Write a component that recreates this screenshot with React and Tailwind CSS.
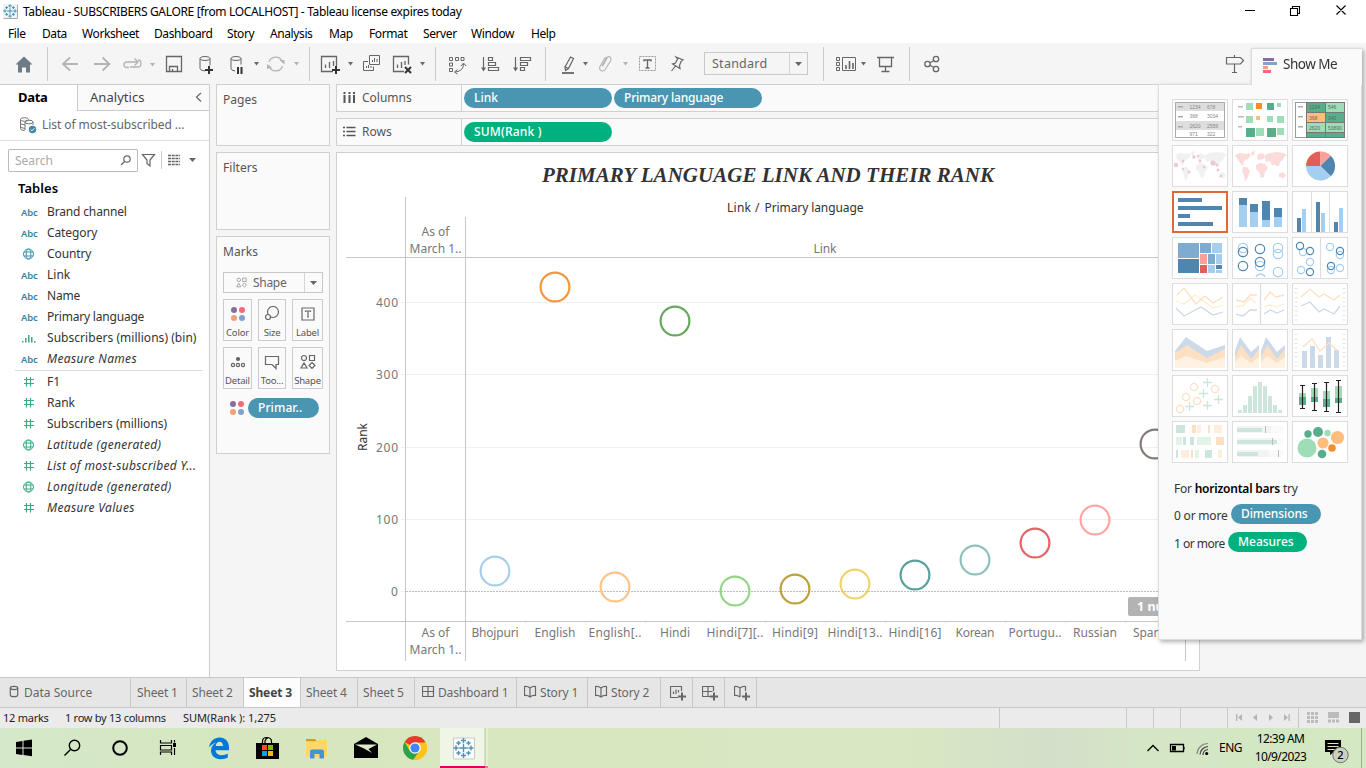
import React from "react";

/* Icon cell: the view box uses window coordinates so that neighbouring cells line up. */
function Cell({ x, y = 0, w, h, children, className = "" }) {
  return (
    <svg width={w} height={h} viewBox={`${x} ${y} ${w} ${h}`} fill="none" className={`block shrink-0 ${className}`}>
      {children}
    </svg>
  );
}

const INK = "#666";
const PALE = "#b4b4b4";

const Caret = ({ x, y = 62, color = INK }) => <path d={`M${x} ${y}h5l-2.5 3.5z`} fill={color} />;
const Sep = ({ x }) => <path d={`M${x + 0.5} 47v34`} stroke="#cbcbcb" />;
const Plus = ({ x, y, s = 4 }) => <path d={`M${x - s} ${y}h${2 * s}M${x} ${y - s}v${2 * s}`} stroke="#333" strokeWidth="2" />;

function Snowflake({ x, y, s = 1, stroke = "#3f8fb5" }) {
  const arms = [[0, 0, 3.4], [0, -6, 2], [0, 6, 2], [-6, 0, 2], [6, 0, 2], [-4, -4, 1.7], [4, -4, 1.7], [-4, 4, 1.7], [4, 4, 1.7]];
  return (
    <g transform={`translate(${x} ${y}) scale(${s})`} stroke={stroke} strokeWidth="1.1">
      {arms.map(([a, b, r], i) => (
        <path key={i} d={`M${a - r} ${b}h${2 * r}M${a} ${b - r}v${2 * r}`} />
      ))}
    </g>
  );
}

function TitleBar() {
  return (
    <header className="flex h-6 shrink-0 items-center bg-white">
      <Cell x={0} w={22} h={24}>
        <path d="M3.5 18.5h14v-14" stroke="#aaa" />
        <rect x="3" y="4" width="14" height="14" fill="#f1f3f4" />
        <Snowflake x={10} y={11} s={0.85} />
      </Cell>
      <h1 className="ml-px flex-1 whitespace-nowrap text-[12px] leading-6 tracking-[-0.340px] text-black">
        Tableau - SUBSCRIBERS GALORE [from LOCALHOST] - Tableau license expires today
      </h1>
      <Cell x={1230} w={136} h={24}>
        <path d="M1245 10.5h10M1290.500 8.500h7v7h-7zM1292.500 8.500v-2h7v7h-2M1336.500 5.500l9 9M1345.500 5.500l-9 9" stroke="#000" strokeWidth="1.100" />
      </Cell>
    </header>
  );
}

function MenuBar() {
  const items = [
    ["File", "w-[34px]"], ["Data", "w-[40px]"], ["Worksheet", "w-[72px]"], ["Dashboard", "w-[73px]"], ["Story", "w-[43px]"],
    ["Analysis", "w-[59px]"], ["Map", "w-[40px]"], ["Format", "w-[54px]"], ["Server", "w-[48px]"], ["Window", "w-[60px]"], ["Help", "w-[40px]"],
  ];
  return (
    <nav className="flex h-[19px] shrink-0 bg-white pl-2 text-[12px] leading-5 tracking-[-0.400px] text-black">
      {items.map(([t, w]) => <span key={t} className={`${w} shrink-0 whitespace-nowrap`}>{t}</span>)}
    </nav>
  );
}

function Toolbar() {
  const c = { y: 43, h: 41 };
  return (
    <div className="flex h-[41px] shrink-0 bg-[#f5f5f5]">
      <Cell x={0} w={48} {...c}>
        <path d="M24 56.500l8.500 8h-2.500v8h-4v-5h-4v5h-4v-8h-2.500z" fill="#707b88" />
        <Sep x={47} />
      </Cell>
      <Cell x={48} w={68} {...c}>
        <path d="M78 64H63M70 57.500L63 64l7 6.500M94 64h15M102.500 57.500l7 6.500-7 6.500" stroke={PALE} strokeWidth="1.800" />
      </Cell>
      <Cell x={116} w={44} {...c}>
        <path d="M129 67.500h-2q-3 0-3-2.500 0-3 3-3h10M134.500 58.500l3.500 3.500-3.500 3.500M138 60q3 0 3 3.500t-3 3.500h-8" stroke={PALE} strokeWidth="1.300" />
        <Caret x={150} y={63} color={PALE} />
      </Cell>
      <Cell x={160} w={30} {...c}><path d="M166.500 56.500h15v15h-15zM169.500 71v-4.500h8v4.500M172.500 71v-2" stroke={INK} strokeWidth="1.300" /></Cell>
      <Cell x={190} w={34} {...c}>
        <ellipse cx="205" cy="58.500" rx="5" ry="2" stroke={INK} />
        <path d="M200 58.500v10q0 2 5 2.500M210 58.500v7" stroke={INK} />
        <Plus x={209} y={70} />
      </Cell>
      <Cell x={224} w={40} {...c}>
        <ellipse cx="236" cy="58.500" rx="5" ry="2" stroke={INK} />
        <path d="M231 58.500v10q0 2 4 2.500M241 58.500v6" stroke={INK} />
        <path d="M238 67v7M241.500 67v7" stroke="#333" strokeWidth="2" />
        <Caret x={254} />
      </Cell>
      <Cell x={264} w={46} {...c}>
        <path d="M269 62a7 7 0 0 1 13-1M282.500 66a7 7 0 0 1-13 1" stroke={PALE} strokeWidth="1.300" />
        <path d="M279.500 60h5v4.500zM267 64v5l5-1.500z" fill={PALE} />
        <Caret x={294} color={PALE} />
        <Sep x={309} />
      </Cell>
      <Cell x={310} w={48} {...c}>
        <path d="M333 71.500h-11.500v-15h15v10M325.500 68v-3.500M329.500 68v-6M333.500 66v-5" stroke={INK} strokeWidth="1.300" />
        <Plus x={336} y={70} />
        <Caret x={348} />
      </Cell>
      <Cell x={358} w={28} {...c}>
        <path d="M369.500 55.500h10v9h-10zM372.500 62v-2M374.500 62v-4M377 62v-3M368 61.500h-4.500v9h10v-4M366.500 68v-2M368.500 68v-3M371 68v-2" stroke={INK} />
      </Cell>
      <Cell x={386} w={50} {...c}>
        <path d="M404 71.500h-10.500v-15h15v8M397.500 68v-3.500M401.500 68v-6M405 65v-4" stroke={INK} strokeWidth="1.300" />
        <path d="M405 67l6 6M411 67l-6 6" stroke="#333" strokeWidth="2" />
        <Caret x={420} />
        <Sep x={435} />
      </Cell>
      <Cell x={436} w={36} {...c}>
        <path d="M449.500 57.500h3v3h-3zM455.500 57.500h3v3h-3zM461 57.500h3v3h-3zM449.500 63h3v3h-3zM449.500 68.500h3v3h-3zM463.500 64q0 7-8 8M461 66l2.500-3 2.500 3M457.500 69.500l-3 2.500 3 2" stroke={INK} />
      </Cell>
      <Cell x={472} w={32} {...c}>
        <path d="M483.500 57v12M488.500 57.500h4v3h-4zM488.500 62.500h7v3h-7zM488.500 67.500h10v3h-10z" stroke={INK} strokeWidth="1.200" />
        <path d="M481 67.500h5l-2.500 4z" fill={INK} />
      </Cell>
      <Cell x={504} w={42} {...c}>
        <path d="M515.500 57v12M520.500 57.500h10v3h-10zM520.500 62.500h7v3h-7zM520.500 67.500h4v3h-4z" stroke={INK} strokeWidth="1.200" />
        <path d="M513 67.500h5l-2.500 4z" fill={INK} />
        <Sep x={545} />
      </Cell>
      <Cell x={546} w={46} {...c}>
        <path d="M565 67l5.500-10 3 1.500-5 10-3 2-.5-3.500 3.500 1.500" stroke={INK} strokeWidth="1.200" />
        <path d="M562 73h12" stroke={INK} strokeWidth="1.800" />
        <Caret x={583} />
      </Cell>
      <Cell x={592} w={40} {...c}>
        <path d="M602 66l4.500-8q2-2.500 4-.5 1 1.500 0 3.500l-5 8q-2 3-4.500 1.500t-.5-5l4.500-7.500q1.500-1 2 .5l-4.500 8" stroke={PALE} strokeWidth="1.100" />
        <Caret x={623} color={PALE} />
      </Cell>
      <Cell x={632} w={30} {...c}>
        <path d="M639.500 56.500h16v14h-16z" stroke="#999" strokeDasharray="2 1" />
        <path d="M644 61.500v-1.500h7v1.500M647.500 60v8M645.500 68h4" stroke={INK} strokeWidth="1.300" />
      </Cell>
      <Cell x={662} w={42} {...c}>
        <path d="M676 57l7 3-2 1.500-1.500 4 .5 3-7.500-4.500 3-1 2-4zM675.500 66l-4 5" stroke={INK} strokeWidth="1.200" />
      </Cell>
      <div className="mt-[9px] flex h-[23px] w-[104px] shrink-0 border border-[#c8c8c8]">
        <span className="flex-1 pl-[7px] text-[12.500px] leading-[21px] tracking-[0.250px] text-[#666]">Standard</span>
        <span className="flex w-[18px] items-center justify-center border-l border-[#d4d4d4]">
          <svg width="7" height="4"><path d="M0 0h7L3.500 4z" fill={INK} /></svg>
        </span>
      </div>
      <Cell x={808} w={64} {...c}>
        <Sep x={823} />
        <path d="M836.500 57.500h3v3h-3zM836.500 62.500h3v3h-3zM836.500 67.500h3v3h-3zM842.500 57.500h13v13h-13z" stroke={INK} />
        <path d="M846 69v-4M849.500 69v-8M853 69v-6" stroke={INK} strokeWidth="1.600" />
        <Caret x={861} />
      </Cell>
      <Cell x={872} w={38} {...c}>
        <path d="M877 57.500h17M879.500 58v8.500h12V58M885.500 67v4M881.500 71.500h8" stroke={INK} strokeWidth="1.300" />
        <Sep x={909} />
      </Cell>
      <Cell x={910} w={40} {...c}>
        <g stroke={INK} strokeWidth="1.300">
          <circle cx="927.500" cy="64" r="2.700" /><circle cx="936" cy="59" r="2.700" /><circle cx="936" cy="69" r="2.700" />
          <path d="M930 62.700l3.500-2M930 65.300l3.500 2" />
        </g>
      </Cell>
      <Cell x={1220} w={30} {...c} className="ml-[270px]">
        <path d="M1226.500 57.500h14l3 3-3 3.500h-14zM1234.500 55v2M1234.500 64v8M1232 72.500h5" stroke={INK} strokeWidth="1.200" />
      </Cell>
    </div>
  );
}

function FieldIcon({ kind }) {
  if (kind === "abc") return <span className="w-[18px] text-[9.500px] font-semibold leading-[21px] tracking-[-0.200px] text-[#3f7f9f]">Abc</span>;
  const green = "#3daa80";
  if (kind === "hash")
    return <svg width="18" height="12" fill="none" className="mt-1"><path d="M5.500 1v9.500M9.500 1v9.500M3 3.500h10M3 7.500h10" stroke={green} strokeWidth="1.200" /></svg>;
  if (kind === "bin")
    return <svg width="18" height="12" className="mt-1"><path d="M1 9h1.500v1.500H1zM4 6h1.500v4.500H4zM7 3h1.500v7.500H7zM10 5h1.500v5.500H10zM13 9h1.500v1.500H13z" fill={green} /></svg>;
  const col = kind === "geo" ? "#3f8fb5" : green;
  return (
    <svg width="18" height="12" fill="none" stroke={col} className="mt-1">
      <circle cx="7.500" cy="6" r="5" /><ellipse cx="7.500" cy="6" rx="2.300" ry="5" /><path d="M3 4h9M3 8h9" />
    </svg>
  );
}

function Field({ kind, name, italic, cls = "" }) {
  return (
    <li className="flex h-[21px] pl-[21px] text-[12px] leading-[21px] text-[#333]">
      <FieldIcon kind={kind} />
      <span className={`-mt-px ml-2 whitespace-nowrap ${italic ? "italic tracking-[0.330px]" : ""} ${cls}`}>{name}</span>
    </li>
  );
}

function DataPane() {
  return (
    <aside className="flex w-[210px] shrink-0 flex-col border-r border-t border-[#ccc] bg-white">
      <div className="flex h-[26px]">
        <div className="w-[77px] pl-[18px] text-[13px] font-bold leading-[25px] tracking-[-0.300px] text-black">Data</div>
        <div className="flex flex-1 items-center border-b border-l border-[#ccc] bg-[#fafafa] pl-3">
          <span className="-mt-[2px] flex-1 text-[13px] leading-6 tracking-[0.050px] text-[#444]">Analytics</span>
          <svg width="15" height="12" fill="none" className="-mt-[2px]"><path d="M7 2L2.500 6 7 10.500" stroke={INK} strokeWidth="1.200" /></svg>
        </div>
      </div>
      <div className="flex h-[30px] border-b border-[#ddd]">
        <Cell x={0} y={111} w={42} h={29}>
          <g stroke="#777" strokeWidth="1">
            <ellipse cx="24.500" cy="119.500" rx="4" ry="1.800" /><path d="M20.500 119.500v9q0 2 4 2" /><ellipse cx="29" cy="122" rx="4" ry="1.800" /><path d="M25 122v8M33 122v3M21 124l4 1M21 127.500l4 1" />
          </g>
          <circle cx="32.500" cy="129.500" r="3.700" fill="#3f86a8" /><path d="M30.700 129.500l1.300 1.300 2.300-2.500" stroke="#fff" />
        </Cell>
        <span className="text-[12px] leading-7 tracking-[-0.060px] text-[#666]">List of most-subscribed ...</span>
      </div>
      <div className="flex pl-2 pt-2">
        <div className="flex h-[23px] w-[130px] rounded-[1px] border border-[#bbb]">
          <span className="flex-1 pl-[6px] text-[12px] leading-[21px] text-[#aaa]">Search</span>
          <svg width="24" height="21" fill="none" stroke={INK} strokeWidth="1.200"><circle cx="14" cy="9" r="3.200" /><path d="M11.500 11.500L8 15" /></svg>
        </div>
        <Cell x={138} y={149} w={71} h={23}>
          <path d="M142.500 154.500h12l-4.500 5.500v6l-3-2.500V160z" stroke={INK} strokeWidth="1.200" />
          <path d="M161.500 151v18" stroke="#ccc" />
          <path d="M168 155.500h12M168 158.500h12M168 161.500h12M168 164.500h12" stroke={INK} strokeWidth="1.300" strokeDasharray="3 0.700" />
          <path d="M189 158h7l-3.500 4z" fill={INK} />
        </Cell>
      </div>
      <h2 className="mt-[5px] pl-[18px] text-[13px] font-semibold leading-[22px] tracking-[0.050px] text-black">Tables</h2>
      <ul className="mt-[3px]">
        <Field kind="abc" name="Brand channel" cls="tracking-[-0.150px]" />
        <Field kind="abc" name="Category" cls="tracking-[-0.100px]" />
        <Field kind="geo" name="Country" cls="tracking-[-0.100px]" />
        <Field kind="abc" name="Link" />
        <Field kind="abc" name="Name" cls="tracking-[-0.200px]" />
        <Field kind="abc" name="Primary language" cls="tracking-[-0.200px]" />
        <Field kind="bin" name="Subscribers (millions) (bin)" cls="tracking-[0.040px]" />
        <Field kind="abc" name="Measure Names" italic cls="-ml-0" />
      </ul>
      <div className="mb-px ml-[15px] mr-[6px] h-px bg-[#ddd]" />
      <ul>
        <Field kind="hash" name="F1" />
        <Field kind="hash" name="Rank" />
        <Field kind="hash" name="Subscribers (millions)" />
        <Field kind="globe" name="Latitude (generated)" italic />
        <Field kind="hash" name="List of most-subscribed Y..." italic />
        <Field kind="globe" name="Longitude (generated)" italic />
        <Field kind="hash" name="Measure Values" italic />
      </ul>
    </aside>
  );
}

const Dots = () => (
  <>
    <circle cx="4" cy="4" r="3" fill="#86709a" /><circle cx="12" cy="4" r="3" fill="#f7687d" />
    <circle cx="4" cy="12" r="3" fill="#f2a07a" /><circle cx="12" cy="12" r="3" fill="#7fa3cc" />
  </>
);
const ShapeGlyph = ({ color = INK }) => (
  <g stroke={color} fill="none" strokeWidth="1.200">
    <circle cx="4" cy="4" r="2.500" /><path d="M9.500 1.500h5v5h-5zM1 14h6L4 9zM12 8.500l3 3-3 3-3-3z" />
  </g>
);

function MarkButton({ label, w, children }) {
  return (
    <div className={`flex h-[42px] ${w} flex-col items-center border border-[#ccc] bg-[#fafafa] pt-[6px]`}>
      <svg width="16" height="16" viewBox="0 0 16 16" fill="none" stroke={INK} strokeWidth="1.200">{children}</svg>
      <span className="mt-[4px] text-[9.500px] leading-[14px] tracking-[-0.200px] text-[#555]">{label}</span>
    </div>
  );
}

const card = "border border-[#d0d0d0] bg-[#fafafa]";
const cardTitle = "pl-[6px] text-[12px] leading-[30px] tracking-[0.050px] text-[#555]";

function Cards() {
  return (
    <section className="flex w-[126px] shrink-0 flex-col gap-[6px] pl-[6px] pr-[6px]">
      <div className={`${card} h-[62px]`}><div className={cardTitle}>Pages</div></div>
      <div className={`${card} h-[78px]`}><div className={cardTitle}>Filters</div></div>
      <div className={`${card} h-[218px]`}>
        <div className={cardTitle}>Marks</div>
        <div className="ml-[6px] mt-[5px] flex h-[21px] w-[100px] border border-[#c8c8c8]">
          <svg width="29" height="19" className="shrink-0"><g transform="translate(12 4) scale(.7)"><ShapeGlyph color="#999" /></g></svg>
          <span className="flex-1 text-[12px] leading-[20px] tracking-[-0.300px] text-[#666]">Shape</span>
          <span className="flex w-[18px] items-center justify-center border-l border-[#d4d4d4]"><svg width="7" height="4"><path d="M0 0h7L3.500 4z" fill={INK} /></svg></span>
        </div>
        <div className="ml-[6px] mt-[6px] flex gap-[6px]">
          <MarkButton label="Color" w="w-[29px]"><g stroke="none"><Dots /></g></MarkButton>
          <MarkButton label="Size" w="w-[28px]"><circle cx="9" cy="6" r="5.500" /><circle cx="4" cy="11" r="2.500" fill="#fafafa" /></MarkButton>
          <MarkButton label="Label" w="w-[31px]"><path d="M2 2h12v12H2zM5.500 6V5h5v1M8 5v6M7 11h2" /></MarkButton>
        </div>
        <div className="ml-[6px] mt-[6px] flex gap-[6px]">
          <MarkButton label="Detail" w="w-[29px]"><circle cx="8" cy="5" r="1.500" fill={INK} /><circle cx="3" cy="11" r="1.600" /><circle cx="8" cy="11" r="1.600" /><circle cx="13" cy="11" r="1.600" /></MarkButton>
          <MarkButton label="Too..." w="w-[28px]"><path d="M1.500 2.500h13v8H12v4l-4-4H1.500z" /></MarkButton>
          <MarkButton label="Shape" w="w-[31px]"><ShapeGlyph /></MarkButton>
        </div>
        <div className="ml-[12px] mt-[9px] flex items-center gap-[3px]">
          <svg width="16" height="16"><Dots /></svg>
          <Pill className="w-[71px] bg-[#4996b2] tracking-[0.100px]">Primar..</Pill>
        </div>
      </div>
    </section>
  );
}

function Pill({ className, children }) {
  return <span className={`flex h-5 items-center whitespace-nowrap rounded-full pl-[10px] text-[12px] font-medium leading-5 text-white ${className}`}>{children}</span>;
}

const MARKS = [
  ["Bhojpuri", 571, "#a0cbe8", 47], ["English", 287, "#f28e2b", 41], ["English[..", 587, "#ffbe7d", 53], ["Hindi", 321, "#59a14f", 30],
  ["Hindi[7][..", 591, "#8cd17d", 57], ["Hindi[9]", 589, "#b6992d", 46], ["Hindi[13..", 584, "#f1ce63", 55], ["Hindi[16]", 575, "#499894", 53],
  ["Korean", 560, "#86bcb6", 39], ["Portugu..", 543, "#e15759", 53], ["Russian", 520, "#ff9d9a", 44], ["Spanish", 444, "#79706e", 44],
];

function AsOf({ y }) {
  return (
    <>
      <text x="435.500" y={y} textAnchor="middle" textLength="28">As of</text>
      <text x="435.500" y={y + 17} textAnchor="middle" textLength="52">March 1..</text>
    </>
  );
}

function Chart() {
  return (
    <Cell x={337} y={153} w={862} h={517}>
      <text x="768" y="182" textAnchor="middle" textLength="452" fontSize="21" fontWeight="bold" fontStyle="italic" fill="#333" className="font-['Liberation_Serif',serif]">
        PRIMARY LANGUAGE LINK AND THEIR RANK
      </text>
      <g fontSize="12" fill="#333">
        <text x="727" y="212" textLength="24">Link</text>
        <text x="755" y="212">/</text>
        <text x="764.500" y="212" textLength="99">Primary language</text>
        <text transform="translate(366.500 451) rotate(-90)" textLength="28">Rank</text>
      </g>
      <g stroke="#f0f0f0">
        {[302, 374, 447, 519].map((y) => <path key={y} d={`M401 ${y + 0.5}H1185`} />)}
        <path d="M401 591.500h4" />
        {MARKS.map((m, i) => <path key={i} d={`M${525.5 + 60 * i} 622v3`} />)}
      </g>
      <path d="M406 591.500H1185" stroke="#bdbdbd" strokeDasharray="2 1" />
      <path d="M346 257.500H1185M346 621.500H1185M405.500 197v464M465.500 217v444M1185.500 197v464" stroke="#c6c6c6" />
      <g fontSize="12" fill="#777">
        {[["400", 307, 22], ["300", 379, 22], ["200", 452, 22], ["100", 524, 22], ["0", 596, 7]].map(([t, y, w]) => (
          <text key={t} x={398 - w} y={y} textLength={w}>{t}</text>
        ))}
        <AsOf y={236} />
        <AsOf y={637} />
        <text x="825" y="253" textAnchor="middle" textLength="23">Link</text>
        {MARKS.map(([t, , , w], i) => <text key={t} x={495 + 60 * i} y="637" textAnchor="middle" textLength={w}>{t}</text>)}
      </g>
      {MARKS.map(([t, y, c], i) => <circle key={t} cx={495 + 60 * i} cy={y} r="14.400" stroke={c} strokeOpacity=".92" strokeWidth="2.200" />)}
      <rect x="1128" y="597" width="56" height="19" rx="2" fill="#b3b3b3" />
      <text x="1137" y="611" fontSize="12.500" fontWeight="bold" fill="#fff">1 null</text>
    </Cell>
  );
}

function Shelf({ icon, name, children }) {
  return (
    <div className="flex h-7 w-[864px] border border-[#d0d0d0] bg-[#fafafa]">
      <svg width="25" height="26" fill="none" className="shrink-0">{icon}</svg>
      <span className="w-[99px] text-[12px] leading-[26px] text-[#555]">{name}</span>
      <div className="flex flex-1 items-center gap-[2px] border-l border-[#d0d0d0] pl-[2px]">{children}</div>
    </div>
  );
}

function Worksheet() {
  return (
    <section className="flex flex-1 flex-col gap-[6px]">
      <Shelf name="Columns" icon={<path d="M7.500 7v2M12.500 7v2M17 7v2M7.500 10v8M12.500 10v8M17 10v8" stroke="#555" strokeWidth="2" />}>
        <Pill className="w-[148px] bg-[#4996b2]">Link</Pill>
        <Pill className="w-[148px] bg-[#4996b2] tracking-[-0.180px]">Primary language</Pill>
      </Shelf>
      <Shelf name="Rows" icon={<path d="M6 8.500h2M6 12.500h2M6 16.500h2M9.500 8.500h9M9.500 12.500h9M9.500 16.500h9" stroke="#555" strokeWidth="1.600" />}>
        <Pill className="w-[148px] bg-[#00b180] tracking-[0.200px]">SUM(Rank )</Pill>
      </Shelf>
      <div className="h-[519px] w-[864px] border border-[#d0d0d0] bg-white"><Chart /></div>
    </section>
  );
}

/* Chart-type thumbnails */
const R = ({ d, f }) => d.map(([x, y, w, h], i) => <rect key={i} x={x} y={y} width={w} height={h} fill={f} />);
const DK = "#4f86b0", LT = "#a5cff0", G1 = "#57ae8b", G2 = "#9fdcb8", MG = "#cde6dc";
const WORLD = "M3 10l5-2 6 1 3-1 2 2-3 4-3 1-2 3 1 3-3-2-3-4-2-3zM19 7l4-1-1 4-2 1zM11 22l4 0 3 4-1 3-2 5-2 2-1-6-2-4zM25 11l3-3 4 1 1 3-2 2-5 1zM24 20l4-2 5 1 3 4-3 4-1 5-3 1-2-6-3-3zM33 10l5-2 7-1 7 1 3 2-3 2-1 3-3 2-1 4-3 0-2-2-2 2-2-5-4 1-1-4zM46 24l4 2M47 29l4-2 3 3-2 3-5-1zM42 22l3 4";

const THUMBS = [
  <>
    <rect x="3.500" y="3.500" width="49" height="35" fill="#fff" stroke="#aaa" />
    <R f="#dedede" d={[[4, 4, 48, 8], [4, 22, 48, 9]]} />
    <R f="#aaa" d={[[6, 7, 5, 1.500], [6, 17, 5, 1.500], [6, 27, 5, 1.500]]} />
    <g fill="#888" fontSize="5" className="font-['Liberation_Sans',sans-serif]">
      <text x="17.500" y="10">1234</text><text x="35" y="10">678</text><text x="17.500" y="19">368</text><text x="35" y="19">3034</text>
      <text x="17.500" y="28.500">2620</text><text x="35" y="28.500">2559</text><text x="17.500" y="36.500">971</text><text x="35" y="36.500">322</text>
    </g>
  </>,
  <>
    <R f="#bbb" d={[[6, 7, 5, 1.500], [6, 17, 6, 1.500], [6, 27, 4, 1.500]]} />
    <R f={G2} d={[[14, 4, 7, 7], [45, 4, 4, 4], [14, 17, 7, 7], [35, 17, 6, 6], [45, 17, 7, 7], [24, 29, 8, 8], [45, 29, 7, 7]]} />
    <R f={G1} d={[[35, 4, 7, 7], [14, 29, 9, 9], [35, 29, 9, 9]]} />
    <R f="#f28e2b" d={[[24, 4, 6, 6]]} /><R f="#ffbe7d" d={[[24, 17, 4, 4]]} />
  </>,
  <>
    <rect x="3.500" y="3.500" width="49" height="35" fill="#fff" stroke="#999" />
    <rect x="14" y="3" width="39" height="36" fill="#777" />
    <R f={G1} d={[[15, 4, 18, 9], [34, 14, 18, 9], [15, 34, 18, 4], [34, 34, 18, 4]]} />
    <R f={G2} d={[[34, 4, 18, 9], [15, 24, 18, 9], [34, 24, 18, 9]]} /><R f="#ffbe7d" d={[[15, 14, 18, 9]]} />
    <R f="#aaa" d={[[6, 7, 5, 1.500], [6, 17, 5, 1.500], [6, 27, 5, 1.500]]} />
    <g fill="#5b6b60" fontSize="5" className="font-['Liberation_Sans',sans-serif]">
      <text x="17" y="10">1234</text><text x="36" y="10">546</text><text x="17" y="20.500">368</text><text x="36" y="20.500">340</text><text x="17" y="30.500">2620</text><text x="36" y="30.500">53890</text>
    </g>
  </>,
  <>
    <path d={WORLD} fill="#f1f1f1" />
    <g fill="#eec8ce">{[[4, 20, 2.200], [11, 16, 1.500], [22, 12, 1.700], [26, 11, 1.300], [28, 16, 1.500], [17, 27, 1.500], [32, 22, 1.200], [41, 18, 2.600], [45, 20, 1.500], [46, 25, 1.500], [49, 31, 1.300], [11, 24, 1.200]].map(([x, y, r], i) => <circle key={i} cx={x} cy={y} r={r} />)}</g>
  </>,
  <path d={WORLD} fill="#fbdcdb" />,
  <>
    <path d="M28.500 21V6.500A14.500 14.500 0 0 0 14 21z" fill="#e15f57" /><path d="M28.500 21V6.500A14.500 14.500 0 0 1 38.800 10.700z" fill="#ffa09b" />
    <path d="M28.500 21L38.800 10.700A14.500 14.500 0 0 1 38.800 31.300z" fill={DK} /><path d="M28.500 21L38.800 31.300A14.500 14.500 0 0 1 14 21z" fill={LT} />
  </>,
  <R f={DK} d={[[6, 7, 24, 4], [6, 15, 44, 4], [6, 23, 12, 4], [6, 31, 35, 4]]} />,
  <><R f={DK} d={[[7, 7, 8, 7], [18, 13, 8, 8], [30, 10, 8, 19], [42, 17, 8, 9]]} /><R f={LT} d={[[7, 14, 8, 22], [18, 21, 8, 15], [30, 29, 8, 7], [42, 26, 8, 10]]} /></>,
  <><R f="#ddd" d={[[19, 1, 1, 40], [37, 1, 1, 40]]} /><R f={DK} d={[[5, 27, 4, 14], [24, 11, 4, 30], [42, 31, 4, 10]]} /><R f={LT} d={[[10, 18, 4, 23], [29, 22, 4, 19], [47, 17, 4, 24]]} /></>,
  <>
    <R f="#7eabd0" d={[[6, 6, 21, 15], [28, 6, 11, 10], [36, 17, 7, 10]]} /><R f={DK} d={[[6, 22, 21, 14], [44, 28, 6, 4]]} />
    <R f={LT} d={[[40, 6, 10, 10], [44, 17, 6, 10], [36, 28, 7, 8], [44, 33, 6, 3]]} /><R f="#ffa09b" d={[[28, 17, 7, 10]]} /><R f="#e15f57" d={[[28, 28, 7, 8]]} />
  </>,
  <g fill="none" strokeWidth="1.200">
    <g stroke={LT}>{[[11, 11], [28, 29], [46, 11], [46, 17], [46, 35]].map(([x, y], i) => <circle key={i} cx={x} cy={y} r="4.700" />)}<path d="M24 40a5 5 0 0 1 9 0" /></g>
    <g stroke={DK}>{[[11, 15], [11, 29], [28, 12], [28, 25]].map(([x, y], i) => <circle key={i} cx={x} cy={y} r="4.700" />)}</g>
  </g>,
  <g fill="none" strokeWidth="1.200">
    <path d="M28.500 1v40" stroke="#ddd" />
    <g stroke={LT}>{[[11, 15], [9, 33], [18, 25], [38, 10], [48, 18], [48, 31], [39, 33]].map(([x, y], i) => <circle key={i} cx={x} cy={y} r="3.600" />)}</g>
    <g stroke={DK}>{[[8, 9], [18, 14], [18, 35], [48, 14], [39, 29]].map(([x, y], i) => <circle key={i} cx={x} cy={y} r="3.600" />)}</g>
  </g>,
  <g fill="none" strokeWidth="1.300">
    <path d="M4 18l8 3 11-9 18 13 10-3" stroke="#ffedcf" /><path d="M5 12l7-7 12 16 9-8 8 7 10-6" stroke="#fde0c3" /><path d="M4 25l8 8 17-9 12 8 10-3" stroke="#cbd9e8" />
  </g>,
  <g fill="none" strokeWidth="1.300">
    <path d="M28.500 1v40" stroke="#ddd" /><path d="M4 24l7-1 7-8 6 5M32 24l6-2 6 2 8-3" stroke="#ffedcf" /><path d="M4 17l8 2 6-7 7 0M32 17l6-8 6 5 8-2" stroke="#fde0c3" /><path d="M4 31l7 2 7-6 7 0M32 31l6-4 7 3 7-3" stroke="#cbd9e8" />
  </g>,
  <g fill="none" strokeWidth="1.300">
    <path d="M4 5v33M52 5v33" stroke="#e6e6e6" strokeWidth="3" strokeDasharray="1 3.500" /><path d="M9 14l9-8 9 8 5-3 10 6 6-5" stroke="#fde0c3" /><path d="M9 23l9-4 9 10 5-3 10 5 6-8" stroke="#cbd9e8" />
  </g>,
  <><path d="M3 22L14 8 35 22 53 16V39H3z" fill="#cbd9e8" /><path d="M3 24L15 16 35 29 53 20V39H3z" fill="#fde0c3" /><path d="M3 32L14 27 35 34 53 28V39H3z" fill="#fff2e2" /></>,
  <>
    {[3, 29].map((x) => <g key={x} transform={`translate(${x} 0)`}><path d="M0 22L5 8 16 23 24 16V39H0z" fill="#cbd9e8" /><path d="M0 28L6 16 16 30 24 20V39H0z" fill="#fde0c3" /><path d="M0 33L6 27 16 34 24 28V39H0z" fill="#fff2e2" /></g>)}
  </>,
  <><path d="M4 5v35M52 5v35" stroke="#e6e6e6" strokeWidth="3" strokeDasharray="1 3.500" /><R f="#cbd9e8" d={[[10, 22, 5, 17], [18, 17, 5, 22], [26, 26, 5, 13], [34, 8, 5, 31], [42, 21, 5, 18]]} /><path d="M11 18l9-8 8 12 9-8 9 8" fill="none" stroke="#fde0c3" strokeWidth="1.300" /></>,
  <g fill="none" strokeWidth="1.300">
    <g stroke="#fde0c3">{[[8, 34], [14, 22], [22, 12], [25, 26], [43, 14]].map(([x, y], i) => <circle key={i} cx={x} cy={y} r="3.600" />)}</g>
    <path d="M31 7.500h9M35.500 3v9M27 18.500h9M31.500 14v9M42 24.500h9M46.500 20v9M31 30.500h9M35.500 26v9M13 31.500h9M17.500 27v9" stroke={MG} />
  </g>,
  <R f={MG} d={[[6, 35, 4, 3], [11, 30, 4, 8], [16, 21, 4, 17], [21, 11, 4, 27], [26, 7, 4, 31], [31, 11, 4, 27], [36, 21, 4, 17], [41, 30, 4, 8], [46, 35, 4, 3]]} />,
  <>
    <R f={G2} d={[[7, 18, 7, 4], [19, 13, 7, 9], [31, 16, 7, 8], [43, 11, 7, 12]]} /><R f={G1} d={[[7, 22, 7, 8], [19, 22, 7, 5], [31, 24, 7, 8], [43, 23, 7, 5]]} />
    <path d="M10.500 10v23M8 10.500h5M8 33.500h5M22.500 8v27M20 8.500h5M20 35.500h5M34.500 7v29M32 7.500h5M32 36.500h5M46.500 5v32M44 5.500h5M44 37.500h5" stroke="#222" strokeWidth="1.200" />
  </>,
  <>
    <R f={MG} d={[[4, 4, 9, 8], [11, 16, 3, 8], [18, 16, 4, 8], [4, 29, 2, 8], [33, 29, 7, 8]]} /><R f="#e2f3e8" d={[[4, 16, 6, 8], [25, 16, 14, 8], [23, 29, 4, 8]]} />
    <R f="#fde0c3" d={[[20, 4, 4, 8], [36, 4, 2, 8], [44, 16, 8, 8], [19, 29, 2, 8]]} /><R f="#ffeede" d={[[25, 4, 4, 8], [42, 4, 8, 8], [9, 29, 8, 8], [46, 29, 4, 8]]} />
  </>,
  <>
    <R f="#fafafa" d={[[5, 5, 46, 7], [5, 17, 46, 7], [5, 29, 46, 7]]} /><R f="#f4f4f4" d={[[5, 5, 34, 7], [5, 17, 38, 7], [5, 29, 32, 7]]} />
    <R f={MG} d={[[5, 7, 25, 4], [5, 19, 40, 4], [5, 31, 21, 4]]} /><R f="#bbb" d={[[33, 5, 1, 7], [40, 17, 1, 7], [46, 29, 1, 7]]} />
  </>,
  <>{[[15, 27, 9.500, G2], [26, 11, 5, G1], [16, 13, 3.700, G1], [35.500, 12, 3.200, G2], [45.500, 16.500, 6.600, "#ffbe7d"], [31, 22, 5.600, "#ffbe7d"], [40, 27, 3.800, "#f28e2b"], [30, 33, 4.300, G1]].map(([x, y, r, c], i) => <circle key={i} cx={x} cy={y} r={r} fill={c} />)}</>,
];

function ShowMe() {
  return (
    <div className="absolute left-[1158px] top-12 flex h-[592px] w-[204px] flex-col drop-shadow-[2px_2px_2px_rgba(0,0,0,0.3)]">
      <div className="relative z-10 ml-[93px] flex h-[37px] w-[111px] items-center border-l border-t border-[#ddd] bg-[#fafafa] pl-[11px]">
        <svg width="15" height="17" className="-mt-1 shrink-0"><R f="#86709a" d={[[0, 1, 11, 3]]} /><R f="#7fa3cc" d={[[0, 5, 14, 3]]} /><R f="#f2a07a" d={[[0, 9, 5, 3]]} /><R f="#f7687d" d={[[0, 13, 8, 3]]} /></svg>
        <span className="-mt-[6px] ml-[5px] whitespace-nowrap text-[13.500px] tracking-[-0.500px] text-[#333]">Show Me</span>
      </div>
      <div className="-mt-px flex-1 border border-[#ddd] bg-[#fafafa] pl-[13px] pt-[14px]">
        <div className="grid w-[176px] grid-cols-3 gap-x-1 gap-y-1">
          {THUMBS.map((t, i) => (
            <svg key={i} width="56" height="42" viewBox="0 0 56 42">
              <rect x={i === 6 ? 1 : 0.5} y={i === 6 ? 1 : 0.5} width={i === 6 ? 54 : 55} height={i === 6 ? 40 : 41} fill="#fff" stroke={i === 6 ? "#de6b35" : "#ddd"} strokeWidth={i === 6 ? 2 : 1} />
              {t}
            </svg>
          ))}
        </div>
        <div className="ml-[2px] mt-4 text-[12px] leading-5 text-[#333]">
          <p className="tracking-[-0.220px]">For <b className="font-semibold text-black">horizontal bars</b> try</p>
          <p className="mt-[5px] flex gap-[3px]"><span className="w-[54px] whitespace-nowrap pt-[2px] tracking-[-0.200px]">0 or more</span><Pill className="w-[90px] bg-[#4996b2] tracking-[-0.100px]">Dimensions</Pill></p>
          <p className="mt-[6px] flex gap-[3px]"><span className="w-[51px] whitespace-nowrap pt-[2px] tracking-[-0.500px]">1 or more</span><Pill className="w-[79px] bg-[#00b180]">Measures</Pill></p>
        </div>
      </div>
    </div>
  );
}

const GridG = () => <path d="M.5 1.500h11v10H.5zM6 1.500v10M.5 6.500h11" />;
const BookG = () => <path d="M6 3Q3.500 1 .5 1.500v9q3-.5 5.500 1.500 2.500-2 5.500-1.500v-9Q8.500 1 6 3zM6 3v9" />;
const PlusG = () => <path d="M8 11.500h8M12 7.500v8" strokeWidth="2" />;

function Tab({ w, icon, children, active, pad = "pl-[6px]" }) {
  return (
    <div className={`flex h-[29px] shrink-0 ${w} items-center border-r border-[#c8c8c8] whitespace-nowrap text-[12px] tracking-[-0.150px] ${pad} ${active ? "bg-[#fcfcfc] font-bold text-[#444]" : "bg-[#e6e6e6] text-[#666]"}`}>
      {icon && <svg width="17" height="16" fill="none" stroke={INK} strokeWidth="1.200" className="shrink-0">{icon}</svg>}
      {children}
    </div>
  );
}

function SheetTabs() {
  return (
    <div className="flex h-[31px] shrink-0 border-y border-[#c8c8c8] bg-[#e6e6e6]">
      <Tab w="w-[131px]" pad="pl-[9px]" icon={<><ellipse cx="5" cy="3" rx="3.700" ry="1.600" /><path d="M1.300 3v7q0 1.700 3.700 1.700t3.700-1.700V3" /></>}><span className="-ml-[2px] tracking-normal">Data Source</span></Tab>
      <Tab w="w-[56px]">Sheet 1</Tab>
      <Tab w="w-[57px]" pad="pl-[5px]">Sheet 2</Tab>
      <Tab w="w-[57px]" pad="pl-[5px]" active>Sheet 3</Tab>
      <Tab w="w-[57px]" pad="pl-[5px]">Sheet 4</Tab>
      <Tab w="w-[57px]" pad="pl-[5px]">Sheet 5</Tab>
      <Tab w="w-[102px]" pad="pl-[7px]" icon={<GridG />}><span className="-ml-px">Dashboard 1</span></Tab>
      <Tab w="w-[71px]" pad="pl-[7px]" icon={<BookG />}><span className="-ml-px">Story 1</span></Tab>
      <Tab w="w-[73px]" pad="pl-[7px]" icon={<BookG />}><span className="-ml-px">Story 2</span></Tab>
      <Tab w="w-[32px]" pad="pl-[9px]" icon={<><path d="M8 12.500H.5v-11h11V6M3.500 9V6.500M6 9V4.500M8.500 7.500V5" /><PlusG /></>} />
      <Tab w="w-[32px]" pad="pl-[9px]" icon={<><path d="M8 11.500H.5v-10h11V6M6 1.500v10M.5 6.500h10" /><PlusG /></>} />
      <Tab w="w-[32px]" pad="pl-[9px]" icon={<><path d="M6 3Q3.500 1 .5 1.500v9q3-.5 5.500 1.500M6 12V3q2.500-2 5.500-1.500V6" /><PlusG /></>} />
    </div>
  );
}

function StatusBar() {
  return (
    <div className="flex h-5 shrink-0 bg-[#ebebeb] text-[11px] leading-5 text-[#222]">
      <span className="w-[63px] whitespace-nowrap pl-[3px] tracking-[-0.250px]">12 marks</span>
      <span className="w-[118px] whitespace-nowrap pl-[2px] tracking-[-0.270px]">1 row by 13 columns</span>
      <span className="flex-1 pl-[2px]">SUM(Rank ): 1,275</span>
      <Cell x={999} y={708} w={367} h={20}>
        <path d="M999.500 708v20M1126.500 708v20M1153.500 708v20M1180.500 708v20M1227.500 708v20M1298.500 708v20" stroke="#c8c8c8" />
        <path d="M1242 714v7l-4-3.500zM1257 714v7l-4-3.500zM1269 714v7l4-3.500zM1284 714v7l4-3.500zM1236 714h1.300v7h-1.300zM1288.500 714h1.300v7h-1.300z" fill="#b5b5b5" />
        <path d="M1307 713.500h11M1307 717.500h11M1307 721.500h11" stroke="#bbb" strokeWidth="3" strokeDasharray="3 1" />
        <path d="M1328 712h11v6h-11z" fill="#bbb" /><path d="M1328 721h11" stroke="#bbb" strokeWidth="3" strokeDasharray="3 1" />
        <path d="M1349 712h11v11h-11z" fill="#666" />
      </Cell>
    </div>
  );
}

function Taskbar() {
  const c = { y: 728, h: 40 };
  return (
    <footer className="flex h-10 shrink-0 bg-[linear-gradient(90deg,#d5e8c9_0%,#d6e7c0_16%,#d8e8c2_66%,#d4dfca_77%,#d5e6c4_84%,#d3e8c3_100%)] text-black">
      <Cell x={0} w={48} {...c}><path d="M16 742l6.500-1v6.500H16zM23.500 740.800l8.500-1.200v7.900h-8.500zM16 748.500h6.500v6.500l-6.500-1zM23.500 748.500h8.500v7.700l-8.500-1.200z" fill="#000" /></Cell>
      <Cell x={48} w={48} {...c}><circle cx="74.500" cy="745.500" r="5.200" stroke="#000" strokeWidth="1.400" /><path d="M70.500 749.500l-6 6" stroke="#000" strokeWidth="1.500" /></Cell>
      <Cell x={96} w={48} {...c}><circle cx="120" cy="748" r="6.800" stroke="#000" strokeWidth="2" /></Cell>
      <Cell x={144} w={48} {...c}><path d="M160.500 740v3h11v-3M160.500 755v-3h11v3M160.500 745.500h11v4.500h-11zM174.500 740v2.500M174.500 748v7" stroke="#000" strokeWidth="1.200" /><path d="M173 743h3v4h-3z" fill="#000" /></Cell>
      <Cell x={192} w={52} {...c}>
        <path d="M209 747.500c1-6.500 5.500-10 10.500-10 6 0 9.500 4.300 9.500 10v2.700h-13.500c.3 3.200 3 5 6.300 5 2.300 0 4.300-.6 6-1.600v4c-2 1.100-4.300 1.600-7 1.600-6 0-9.800-3.500-9.800-8.700 0-3.700 2-6.500 5.500-8-2.500.6-5 2-7.500 5zm6.700-1.500h7.300c0-2.700-1.300-4.200-3.400-4.200-2.200 0-3.600 1.700-3.900 4.200z" fill="#0078d7" />
      </Cell>
      <Cell x={244} w={48} {...c}>
        <path d="M256 743h23v16h-23z" fill="#000" /><path d="M262.500 743v-1.500q0-4 4-4 5 0 5 4v1.500M265 743v-2q1-3 3-3" stroke="#000" strokeWidth="1.200" />
        <path d="M262 745h5v5h-5z" fill="#f25022" /><path d="M268 745h5v5h-5z" fill="#7fba00" /><path d="M262 751h5v5h-5z" fill="#00a4ef" /><path d="M268 751h5v5h-5z" fill="#ffb900" />
      </Cell>
      <Cell x={292} w={48} {...c}>
        <path d="M306 739h9l2 2.500h-11z" fill="#d99a1c" /><path d="M306 741.500h11l2-1.500h8v17h-21z" fill="#ffd766" /><path d="M310 758.500v-7q0-2 2-2h10q2 0 2 2v7h-4.500v-4.500h-5v4.500z" fill="#3f95d6" />
      </Cell>
      <Cell x={340} w={50} {...c}><path d="M354 744l12-7 12 7v14h-24z" fill="#000" /><path d="M355 744.500h22l-8.500 4.500 3.500 4-8-4.500z" fill="#dcebca" /></Cell>
      <Cell x={390} w={50} {...c}>
        <circle cx="415" cy="748" r="12" fill="#fcc31e" />
        <path d="M415 748L404.600 742A12 12 0 0 1 425.400 742z" fill="#e33b2e" /><path d="M404.600 742A12 12 0 0 0 413 759.800L419.500 751 410 751z" fill="#2ba24c" />
        <path d="M415 742.500h10.700a12 12 0 0 1-10.700 17.500l5-9z" fill="#fcc31e" />
        <circle cx="415" cy="748" r="5.800" fill="#fff" /><circle cx="415" cy="748" r="4.600" fill="#4285f4" />
      </Cell>
      <Cell x={440} w={50} {...c}>
        <path d="M440 728h45v40h-45z" fill="#eff6e6" /><path d="M485.500 728h2.500v40h-2.500z" fill="#e2efcf" /><path d="M485 728v38" stroke="#b5c9a0" />
        <path d="M440 766h45v2h-45z" fill="#e3005f" /><path d="M485 766h3v2h-3z" fill="#ee6ca2" />
        <path d="M453.500 738h21v21h-21z" fill="#fafafa" stroke="#c9c9c9" /><Snowflake x={463.500} y={748} s={1.250} stroke="#4c94b8" />
      </Cell>
      <div className="flex-1" />
      <Cell x={1140} w={78} {...c}>
        <path d="M1147.500 751l5.500-5.500 5.500 5.500" stroke="#000" strokeWidth="1.300" />
        <path d="M1170.500 744.500h13v7h-13zM1184 747v2.500" stroke="#000" strokeWidth="1.300" /><path d="M1172 746h4v4.500h-4z" fill="#000" />
        <g strokeWidth="1.200" stroke="#444"><path d="M1197 754a11 11 0 0 1 11-10.500" stroke="#888" /><path d="M1200 754.500a8.500 8.500 0 0 1 8-8M1203 755a5.500 5.500 0 0 1 5-5.500" /></g><circle cx="1206.700" cy="753.500" r="1.600" fill="#000" />
      </Cell>
      <span className="w-[29px] pl-px text-[12px] leading-[40px] tracking-[-0.500px]">ENG</span>
      <div className="w-[68px] whitespace-nowrap pr-px pt-[2px] text-center text-[12px] leading-[18px] tracking-[-0.600px]">12:39 AM<br />10/9/2023</div>
      <Cell x={1315} w={51} {...c}>
        <path d="M1325 740h16v12h-7l-4 3v-3h-5z" fill="#000" /><path d="M1327.500 743.500h11M1327.500 746.500h11M1327.500 749.500h7" stroke="#d6e8c4" />
        <circle cx="1340.500" cy="755" r="7.700" fill="#c9d1c3" stroke="#6c7566" />
        <text x="1340.500" y="759" textAnchor="middle" fontSize="11" fontWeight="500" fill="#000">2</text>
        <path d="M1361.500 728v40" stroke="#9fb091" />
      </Cell>
    </footer>
  );
}

export default function App() {
  return (
    <div className="relative flex h-[768px] w-[1366px] flex-col overflow-hidden bg-[#f5f5f5] font-['Noto_Sans','Open_Sans',sans-serif]">
      <TitleBar />
      <MenuBar />
      <Toolbar />
      <main className="flex h-[593px] shrink-0">
        <DataPane />
        <Cards />
        <Worksheet />
      </main>
      <SheetTabs />
      <StatusBar />
      <Taskbar />
      <ShowMe />
    </div>
  );
}
